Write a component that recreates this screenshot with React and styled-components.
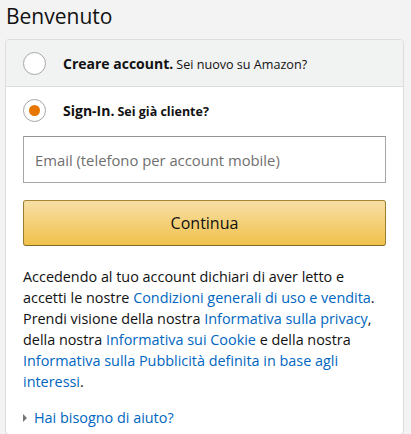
import React from 'react'
import styled, { createGlobalStyle } from 'styled-components'

const GlobalStyle = createGlobalStyle`
  body {
    margin: 0;
    background-color: #f3f3f3;
    font-family: 'Open Sans', 'Noto Sans', sans-serif;
    color: #111;
  }
`

const Page = styled.div`
  padding: 2px 7px 0 5px;
`

const Title = styled.h1`
  margin: 0 0 9px 1px;
  font-size: 21px;
  line-height: 28px;
  font-weight: 400;
  color: #111;
`

const Card = styled.div`
  background: #fff;
  border: 1px solid #dddddd;
  border-radius: 4px;
  overflow: hidden;
`

const OptionRow = styled.div`
  display: flex;
  align-items: center;
  gap: 17px;
  height: 46px;
  padding: 0 17px;
  background: ${p => (p.$active ? '#fff' : '#f1f2f2')};
  border-bottom: ${p => (p.$active ? 'none' : '1px solid #dddddd')};
`

const Radio = styled.span`
  box-sizing: border-box;
  width: 23px;
  height: 23px;
  border-radius: 50%;
  border: 1px solid #a6a6a6;
  background: #fff;
  display: flex;
  align-items: center;
  justify-content: center;
  flex-shrink: 0;
  &::after {
    content: '';
    display: ${p => (p.$checked ? 'block' : 'none')};
    width: 11px;
    height: 11px;
    border-radius: 50%;
    background: #e77600;
  }
`

const OptionLabel = styled.span`
  font-size: 14px;
  font-weight: 700;
  margin-right: 3px;
`

const Hint = styled.span`
  font-weight: ${p => (p.$bold ? 700 : 400)};
  font-size: ${p => (p.$bold ? '12.5px' : '12.6px')};
`

const Content = styled.div`
  padding: 3px 17px 6px;
  display: flex;
  flex-direction: column;
`

const Input = styled.input`
  box-sizing: border-box;
  height: 47px;
  width: 100%;
  border: 1px solid #a6a6a6;
  border-top-color: #949494;
  border-radius: 0;
  padding: 0 11px;
  font-family: inherit;
  font-size: 14.8px;
  color: #111;
  outline: none;
  &::placeholder {
    color: #6f6f6f;
  }
`

const Button = styled.button`
  box-sizing: border-box;
  margin-top: 17px;
  height: 46px;
  width: 100%;
  border: 1px solid #a88734;
  border-color: #a88734 #9c7e31 #846a29;
  border-radius: 3px;
  background: linear-gradient(to bottom, #f7dfa5, #f0c14b);
  font-family: inherit;
  font-size: 16px;
  color: #111;
`

const Legal = styled.p`
  margin: 20px 0 0;
  font-size: 14.4px;
  line-height: 21px;
  color: #111;
`

const Link = styled.a`
  color: #0066c0;
  text-decoration: none;
`

const Help = styled.div`
  display: flex;
  align-items: center;
  gap: 7px;
  margin-top: 15px;
  font-size: 14.4px;
  line-height: 21px;
`

const Caret = styled.span`
  width: 0;
  height: 0;
  border-top: 4px solid transparent;
  border-bottom: 4px solid transparent;
  border-left: 4px solid #767676;
`

export default function App() {
  return (
    <Page>
      <GlobalStyle />
      <Title>Benvenuto</Title>
      <Card>
        <OptionRow>
          <Radio />
          <span>
            <OptionLabel>Creare account.</OptionLabel>
            <Hint>Sei nuovo su Amazon?</Hint>
          </span>
        </OptionRow>
        <OptionRow $active>
          <Radio $checked />
          <span>
            <OptionLabel>Sign-In.</OptionLabel>
            <Hint $bold>Sei già cliente?</Hint>
          </span>
        </OptionRow>
        <Content>
          <Input placeholder="Email (telefono per account mobile)" />
          <Button>Continua</Button>
          <Legal>
            Accedendo al tuo account dichiari di aver letto e accetti le nostre{' '}
            <Link href="#">Condizioni generali di uso e vendita</Link>. Prendi
            visione della nostra <Link href="#">Informativa sulla privacy</Link>,
            della nostra <Link href="#">Informativa sui Cookie</Link> e della
            nostra{' '}
            <Link href="#">
              Informativa sulla Pubblicità definita in base agli interessi
            </Link>
            .
          </Legal>
          <Help>
            <Caret />
            <Link href="#">Hai bisogno di aiuto?</Link>
          </Help>
        </Content>
      </Card>
    </Page>
  )
}
